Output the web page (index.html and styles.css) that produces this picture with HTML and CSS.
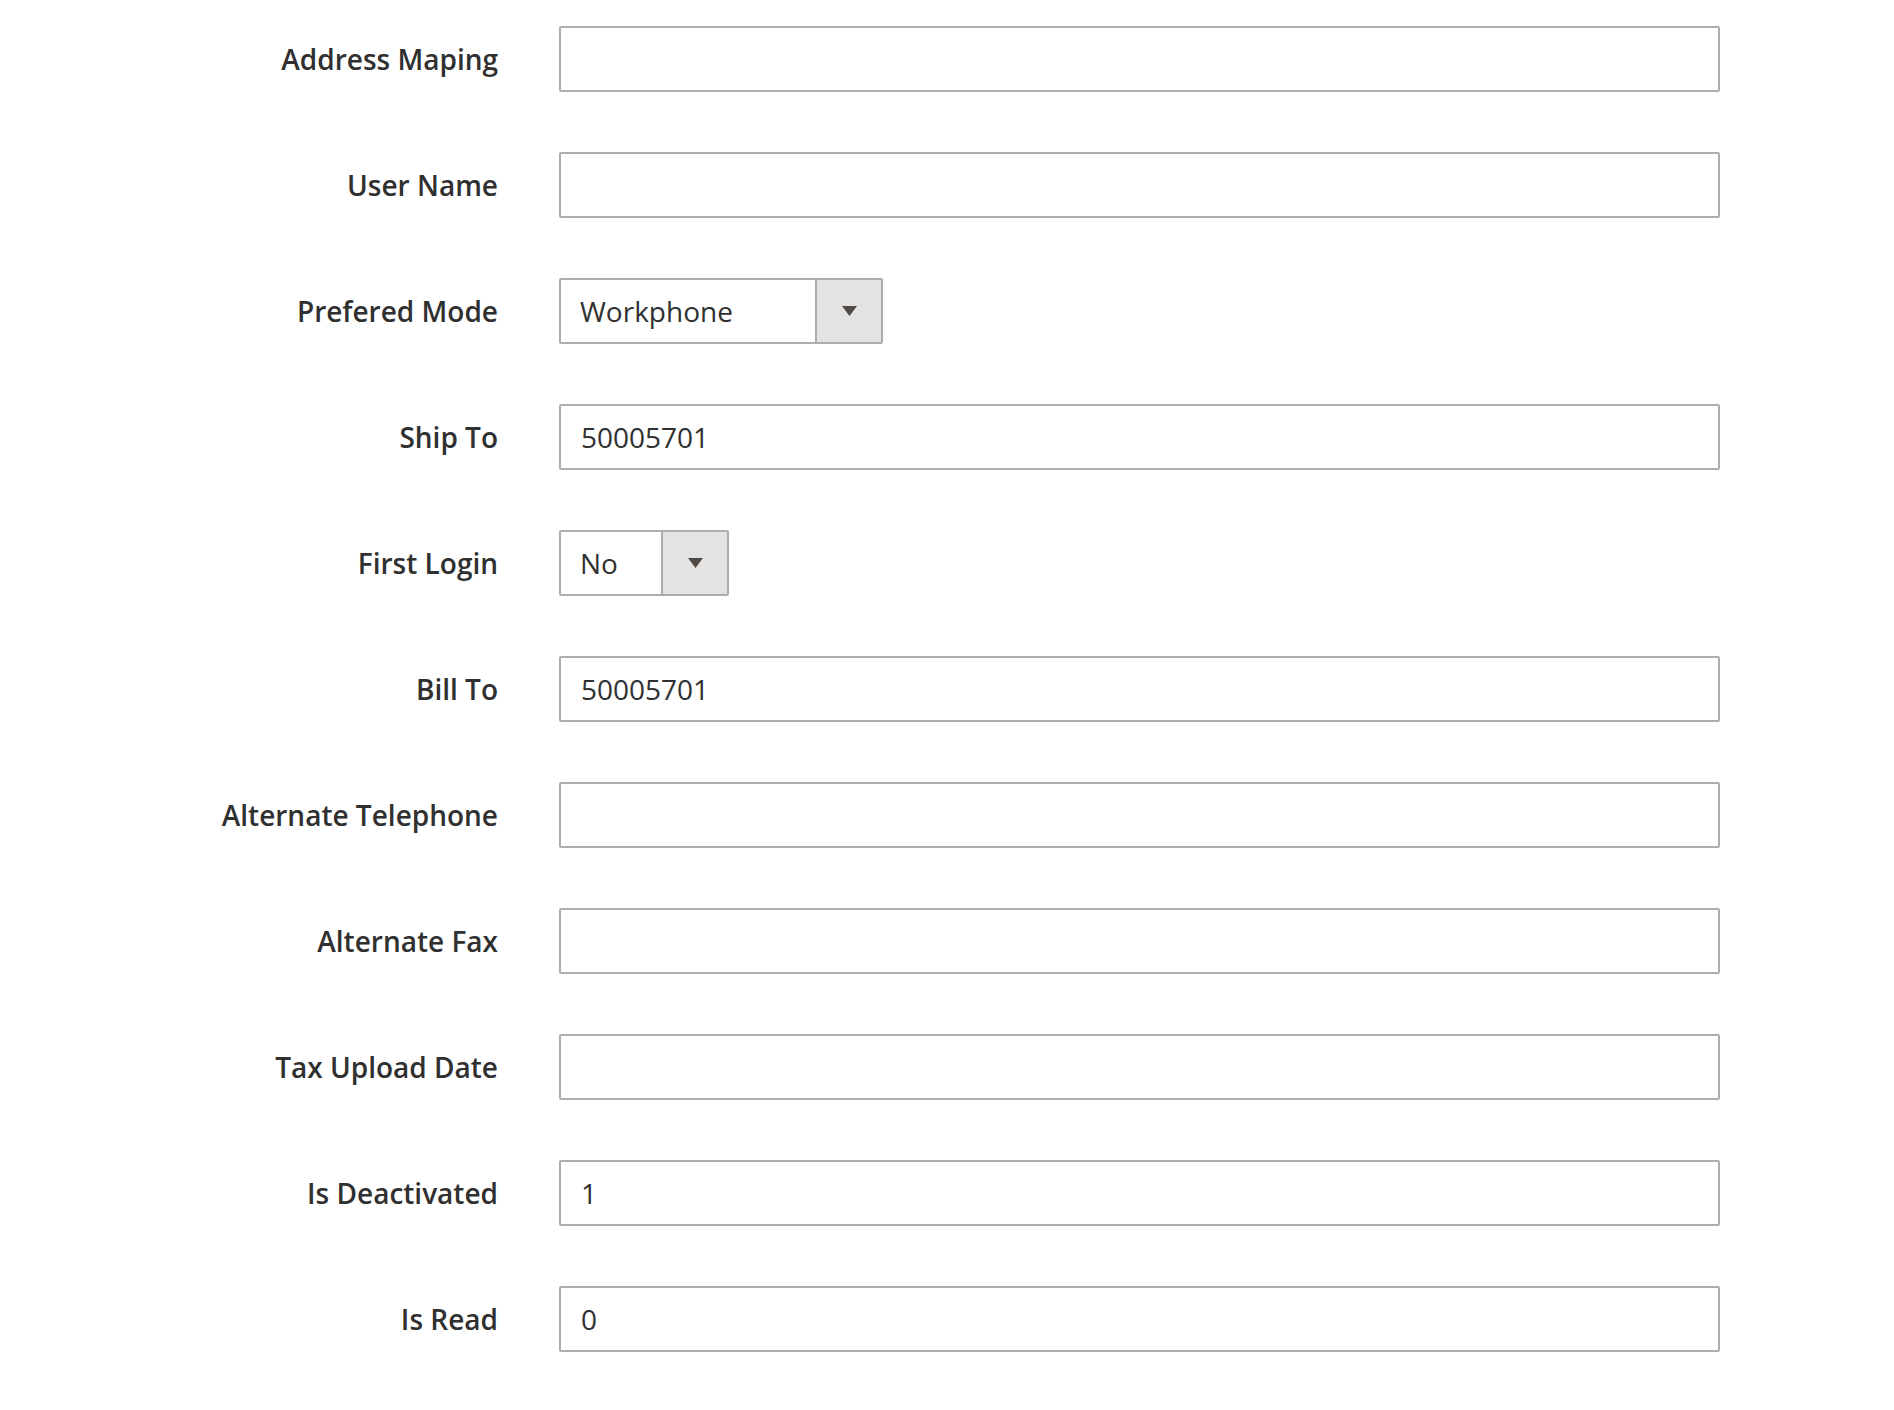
FILE: index.html
```html
<!DOCTYPE html>
<html lang="en">
<head>
<meta charset="utf-8">
<title>Customer Form</title>
<link rel="stylesheet" href="styles.css">
</head>
<body>
<form class="form">
  <div class="row"><label class="label">Address Maping</label><div class="control"><input class="text" type="text" value=""></div></div>
  <div class="row"><label class="label">User Name</label><div class="control"><input class="text" type="text" value=""></div></div>
  <div class="row"><label class="label">Prefered Mode</label><div class="control"><div class="select select-wide"><span class="select-value">Workphone</span><span class="select-btn"><svg width="15" height="10" viewBox="0 0 15 10"><path d="M0 0H15L7.5 10Z" fill="#514943"/></svg></span></div></div></div>
  <div class="row"><label class="label">Ship To</label><div class="control"><input class="text" type="text" value="50005701"></div></div>
  <div class="row"><label class="label">First Login</label><div class="control"><div class="select select-narrow"><span class="select-value">No</span><span class="select-btn"><svg width="15" height="10" viewBox="0 0 15 10"><path d="M0 0H15L7.5 10Z" fill="#514943"/></svg></span></div></div></div>
  <div class="row"><label class="label">Bill To</label><div class="control"><input class="text" type="text" value="50005701"></div></div>
  <div class="row"><label class="label">Alternate Telephone</label><div class="control"><input class="text" type="text" value=""></div></div>
  <div class="row"><label class="label">Alternate Fax</label><div class="control"><input class="text" type="text" value=""></div></div>
  <div class="row"><label class="label">Tax Upload Date</label><div class="control"><input class="text" type="text" value=""></div></div>
  <div class="row"><label class="label">Is Deactivated</label><div class="control"><input class="text" type="text" value="1"></div></div>
  <div class="row"><label class="label">Is Read</label><div class="control"><input class="text" type="text" value="0"></div></div>
</form>
</body>
</html>
```

FILE: styles.css
```css
html, body {
  margin: 0;
  padding: 0;
  background: #ffffff;
}
body {
  font-family: "Open Sans", "Liberation Sans", sans-serif;
  color: #303030;
}
.form {
  display: flex;
  flex-direction: column;
  gap: 60px;
  padding-top: 26px;
}
.row {
  display: grid;
  grid-template-columns: 498px 1161px;
  column-gap: 61px;
  align-items: center;
  height: 66px;
}
.label {
  text-align: right;
  font-size: 28px;
  font-weight: 600;
  color: #303030;
  line-height: 1;
}
.control {
  display: flex;
  height: 66px;
}
.text {
  box-sizing: border-box;
  width: 100%;
  height: 66px;
  margin: 0;
  border: 2px solid #adadad;
  border-radius: 2px;
  padding: 0 20px;
  font-family: "Open Sans", "Liberation Sans", sans-serif;
  font-size: 28px;
  color: #303030;
  background: #ffffff;
  outline: none;
}
.select {
  box-sizing: border-box;
  display: flex;
  align-items: stretch;
  height: 66px;
  border: 2px solid #adadad;
  border-radius: 2px;
  background: #ffffff;
}
.select-wide { width: 324px; }
.select-narrow { width: 170px; }
.select-value {
  flex: 1;
  display: flex;
  align-items: center;
  padding-left: 19px;
  font-size: 28px;
  color: #303030;
}
.select-btn {
  width: 64px;
  border-left: 2px solid #adadad;
  background: #e3e3e3;
  display: flex;
  align-items: center;
  justify-content: center;
}
```
